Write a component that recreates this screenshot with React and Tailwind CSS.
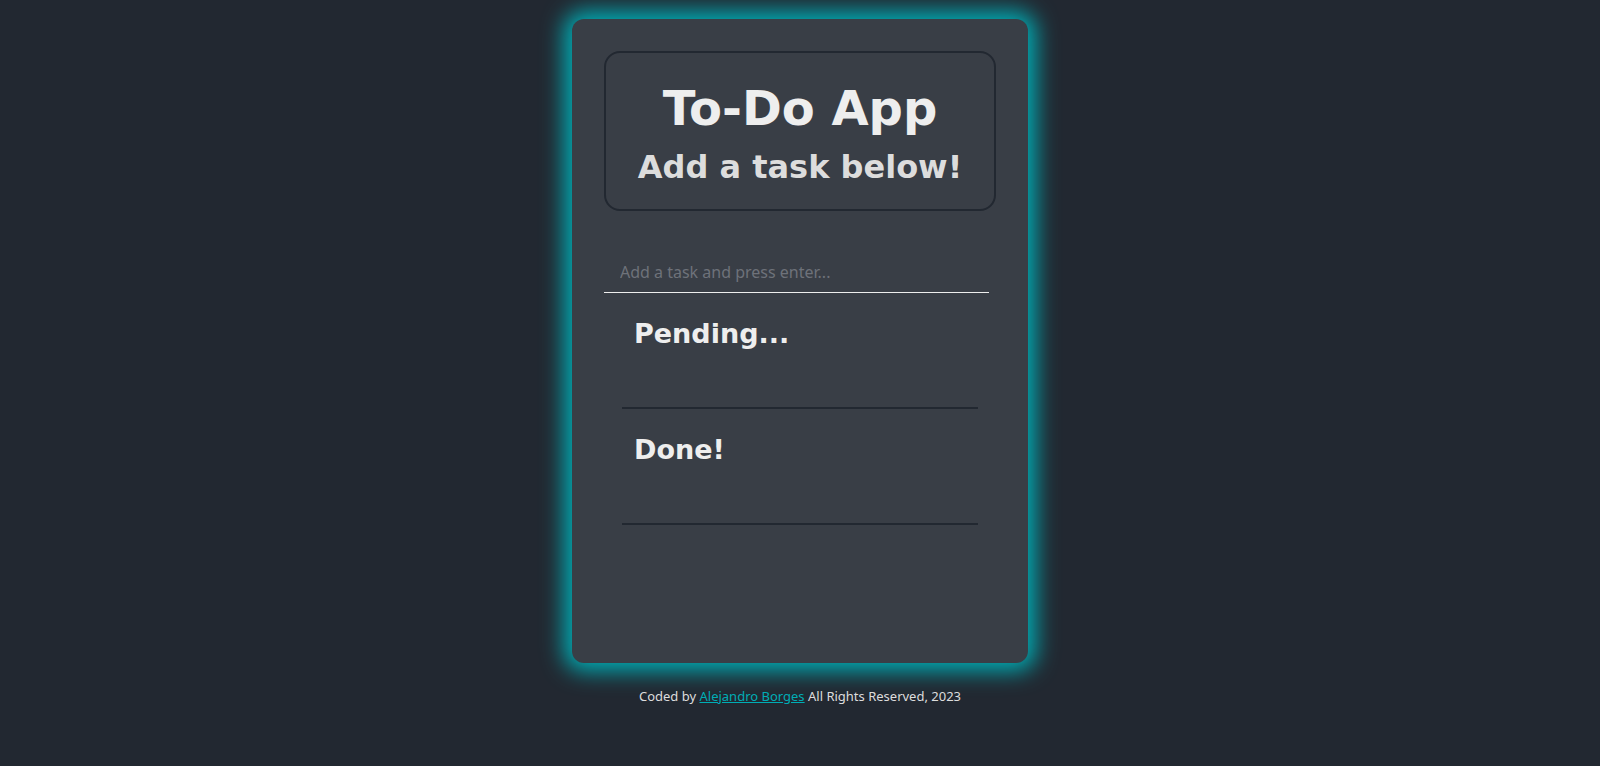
import React, { useState } from 'react';

// Sección de tareas (pendientes / hechas)
function TaskSection({ title, tasks }) {
  return (
    <section className="mx-[18px] border-b-2 border-[#222831] pt-[25px]">
      <h2 className="pl-3 text-[27px] leading-[32px] font-bold text-[#eeeeee]">{title}</h2>
      <ul className="min-h-[57px]">
        {tasks.map((t, i) => (
          <li key={i} className="px-3 py-1 text-[#eeeeee]">{t}</li>
        ))}
      </ul>
    </section>
  );
}

export default function App() {
  const [value, setValue] = useState('');
  const [pending, setPending] = useState([]);
  const [done] = useState([]);

  const handleKey = (e) => {
    if (e.key === 'Enter' && value.trim()) {
      setPending([...pending, value.trim()]);
      setValue('');
    }
  };

  return (
    <div className="min-h-[766px] w-full bg-[#222831] flex flex-col items-center pt-[19px] font-['DejaVu_Sans',sans-serif]">
      {/* Tarjeta principal */}
      <div className="w-[456px] h-[644px] bg-[#393e46] rounded-xl shadow-[0_0_22px_8px_#00adb5] p-8 flex flex-col">
        <header className="border-2 border-[#222831] rounded-2xl pt-[27px] pb-[23px] text-center">
          <h1 className="text-[48px] leading-[56px] font-bold text-[#eeeeee]">To-Do App</h1>
          <h2 className="mt-[13px] text-[32px] leading-[37px] font-bold text-[#dddddd]">Add a task below!</h2>
        </header>

        <input
          type="text"
          value={value}
          onChange={(e) => setValue(e.target.value)}
          onKeyDown={handleKey}
          placeholder="Add a task and press enter..."
          className="mt-[41px] w-[385px] h-[41px] bg-transparent border-b border-[#eeeeee] pl-4 text-base text-[#eeeeee] outline-none placeholder:text-[#6e727a] font-['Noto_Sans',sans-serif]"
        />

        <TaskSection title="Pending..." tasks={pending} />
        <TaskSection title="Done!" tasks={done} />
      </div>

      <footer className="mt-[24px] text-[13px] text-[#dddddd] font-['Noto_Sans',sans-serif]">
        Coded by{' '}
        <a href="#" className="text-[#00adb5] underline">Alejandro Borges</a>{' '}
        All Rights Reserved, 2023
      </footer>
    </div>
  );
}
